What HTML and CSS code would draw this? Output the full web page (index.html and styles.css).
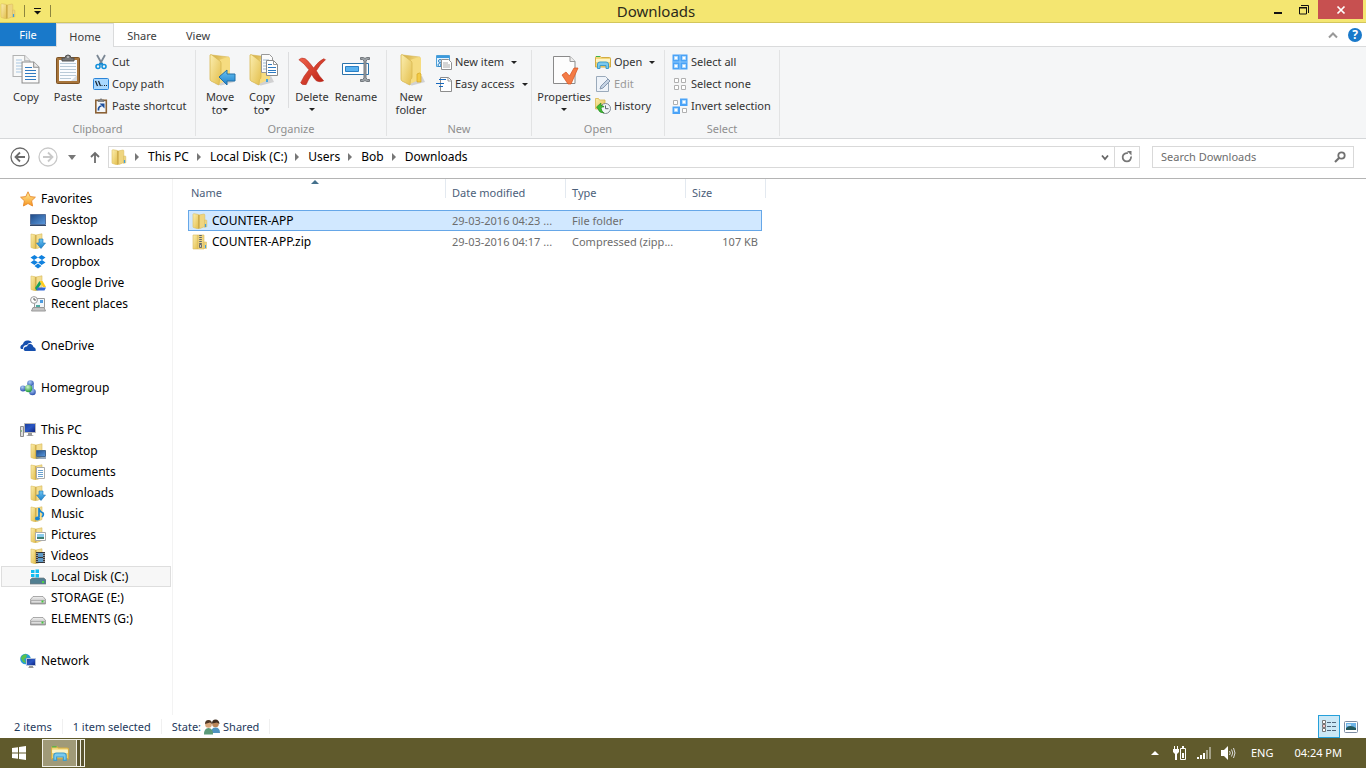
FILE: index.html
```html
<!DOCTYPE html>
<html lang="en">
<head>
<meta charset="utf-8">
<title>Downloads</title>
<link rel="stylesheet" href="styles.css">
</head>
<body>
<svg class="sprite" aria-hidden="true">
  <defs>
    <linearGradient id="gy" x1="0" y1="0" x2="1" y2="1"><stop offset="0" stop-color="#fbeeb0"/><stop offset="1" stop-color="#e3be4b"/></linearGradient>
    <linearGradient id="gd" x1="0" y1="0" x2="1" y2="0"><stop offset="0" stop-color="#d3ae45"/><stop offset="1" stop-color="#f3da83"/></linearGradient>
    <linearGradient id="gb" x1="0" y1="0" x2="0" y2="1"><stop offset="0" stop-color="#6cc4f2"/><stop offset="1" stop-color="#1b7fcb"/></linearGradient>
    <linearGradient id="gs" x1="0" y1="0" x2="1" y2="1"><stop offset="0" stop-color="#1d3f9a"/><stop offset=".5" stop-color="#2a56c4"/><stop offset="1" stop-color="#0c1f78"/></linearGradient>
    <linearGradient id="gk" x1="0" y1="0" x2="1" y2="1"><stop offset="0" stop-color="#1f4a86"/><stop offset="1" stop-color="#5c9be0"/></linearGradient>
    <linearGradient id="gr" x1="0" y1="0" x2="1" y2="1"><stop offset="0" stop-color="#f0624a"/><stop offset="1" stop-color="#b81d12"/></linearGradient>
    <linearGradient id="gg" x1="0" y1="0" x2="0" y2="1"><stop offset="0" stop-color="#f2f2f2"/><stop offset="1" stop-color="#a9a9a9"/></linearGradient>
    <linearGradient id="go" x1="0" y1="0" x2="0" y2="1"><stop offset="0" stop-color="#fff2a0"/><stop offset="1" stop-color="#f7941d"/></linearGradient>
    <radialGradient id="ball" cx=".4" cy=".3" r=".7"><stop offset="0" stop-color="#a9cdf5"/><stop offset="1" stop-color="#2b4fae"/></radialGradient>
    <radialGradient id="ballg" cx=".4" cy=".3" r=".7"><stop offset="0" stop-color="#d5f5cf"/><stop offset="1" stop-color="#1f9a3a"/></radialGradient>
  </defs>
  <symbol id="folder" viewBox="0 0 16 16"><path d="M1 1.500q0-.8 1-.8l4.500.8V16L1.500 14.500q-.5 0-.5-1z" fill="url(#gy)" stroke="#dcbd5c" stroke-width=".6"/><path d="M7 2l5-1q.8 0 .8 1v11.500L8 15.500l-1-.5z" fill="#efd57f" stroke="#dcbd5c" stroke-width=".6"/><path d="M6.900 2v13.500" stroke="#c39d33"/><path d="M12.500 7h1.700q.6 0 .6.800v6l-2.300.6z" fill="#ecd47f" stroke="#d8ba5c" stroke-width=".5"/><path d="M13.500 11v3" stroke="#3e9fe0" stroke-width="1.200"/></symbol>
  <symbol id="folder-side" viewBox="0 0 16 16"><path d="M1 1l4.500.8V16L1 14.500z" fill="url(#gy)" stroke="#dcbd5c" stroke-width=".6"/><path d="M6 2l6-1.200v12.700L7 15.500l-1-.3z" fill="#f3dd90" stroke="#d9ba5c" stroke-width=".6"/><path d="M5.800 2v13.500" stroke="#c39d33" stroke-width=".8"/></symbol>
  <symbol id="bigfolder" viewBox="0 0 32 32"><path d="M8 30l6 1.500 13-3.500-3-6z" fill="#9b9b9b" opacity=".4"/><path d="M5 1l17 2v22l-12 4z" fill="url(#gd)" stroke="#d3ae45" stroke-width=".5"/><path d="M12 6l9-3 2 1v21l-11 5z" fill="#f6dc80"/><path d="M3 1q1-1 2 0l8 6q1 1 1 2v14q0 2-1.500 2.500L12 31l-8-4q-1-.5-1-2z" fill="url(#gy)" stroke="#d8b752" stroke-width=".8"/></symbol>
  <symbol id="page" viewBox="0 0 18 22"><path d="M1 1h11l5 5v15H1z" fill="#fbfbfb" stroke="#8e8e8e"/><path d="M12 1v5h5" fill="#e8e8e8" stroke="#8e8e8e"/></symbol>
  <symbol id="copy" viewBox="0 0 32 32"><svg x="2" y="0" width="19" height="24" opacity=".65"><use href="#page"/></svg><path d="M6 6h6M6 9h8M6 12h6M6 15h6M6 18h6" stroke="#a9c7e2"/><svg x="11" y="6" width="19" height="25"><use href="#page"/></svg><path d="M15 13.500h7M15 16.500h11M15 19.500h11M15 22.500h11M15 25.500h11" stroke="#2f7ac1"/></symbol>
  <symbol id="paste" viewBox="0 0 32 32"><rect x="4.500" y="3.500" width="23" height="26" rx="1" fill="#a8753b" stroke="#7c5225"/><path d="M7 6h18v21H7z" fill="#fafcff"/><path d="M25 27h-6l6-6z" fill="#d7dde3"/><path d="M8 9.500h16M8 12.500h16M8 15.500h16M8 18.500h16M8 21.500h16M8 24.500h11" stroke="#b9cad8"/><path d="M10 7V4h3q0-3 3-3t3 3h3v3z" fill="#777" stroke="#555"/><path d="M15 3h2" stroke="#eee"/></symbol>
  <symbol id="cut" viewBox="0 0 16 16"><path d="M4 1l5 9M12 1L7 10" stroke="#7b8794" stroke-width="1.800"/><path d="M7.500 9l-1.200 2M8.500 9l1.200 2" stroke="#1583cb" stroke-width="2"/><circle cx="5" cy="12.500" r="2" fill="none" stroke="#1691dc" stroke-width="1.600"/><circle cx="11" cy="12.500" r="2" fill="none" stroke="#1691dc" stroke-width="1.600"/></symbol>
  <symbol id="copypath" viewBox="0 0 16 16"><rect x=".5" y="2.500" width="15" height="11" rx="1" fill="#a9d8ff" stroke="#2b84d8"/><path d="M2.500 5l2 5M5.500 5l2 5" stroke="#16202c" stroke-width="1.200"/><path d="M8.500 9.500h1M11 9.500h1M13 9.500h1" stroke="#16202c"/></symbol>
  <symbol id="pasteshort" viewBox="0 0 16 16"><rect x="2.800" y="2.300" width="10.500" height="12.500" fill="#f4f7fa" stroke="#8b6236" stroke-width="1.600"/><path d="M5 3.500V2h2l1-1.500L9 2h2v1.500z" fill="#888" stroke="#555" stroke-width=".5"/><path d="M5.500 12.500q-.5-4 3-4.500" fill="none" stroke="#1c4f9c" stroke-width="1.700"/><path d="M6.500 5.500h5v5z" fill="#1c4f9c"/></symbol>
  <symbol id="moveto" viewBox="0 0 32 32"><use href="#bigfolder" x="3" width="32" height="32"/><path d="M15 23l8-7v4h8v7h-8v4z" fill="url(#gb)" stroke="#2370a8"/></symbol>
  <symbol id="copyto" viewBox="0 0 32 32"><use href="#bigfolder" x="1" width="32" height="32"/><path d="M15.500.5h8l3 3v15h-11z" fill="#fbfbfb" stroke="#999"/><path d="M17 6h6M17 9h4M17 12h3M17 15h3" stroke="#9eb8d0"/><path d="M20.500 6.500h7l4 4v11h-11z" fill="#fff" stroke="#8b8b8b"/><path d="M27.500 6.500v4h4" fill="none" stroke="#999"/><path d="M22 10.500h4M22 13.500h8M22 16.500h8M22 18.500h8" stroke="#2f7ac1"/><path d="M21 25v3" stroke="#48a6df" stroke-width="2"/></symbol>
  <symbol id="delete" viewBox="0 0 32 32"><path transform="translate(1 2) scale(.92)" d="M2 4q3-3 7-1 4 3 9 10 6-8 11-10l2 1q-6 5-10 12 3 6 8 11-4 2-8 0-3-3-5-7-4 6-6 11-5 1-6-2 3-7 9-14Q8 8 2 4z" fill="url(#gr)" stroke="#b52a1d" stroke-width=".6"/></symbol>
  <symbol id="rename" viewBox="0 0 32 32"><path d="M2.500 9.500h26v11h-26z" fill="#fff" stroke="#2a72ab"/><path d="M5.500 12.500h13v5h-13z" fill="#5ab2f0" stroke="#2c7fc3"/><path d="M20.500 3.500h3l1.500 1 1.500-1h3v2h-2l-1.500 1.500v17l1.500 1.500h2v2h-3l-1.500-1-1.500 1h-3v-2h2l1.500-1.500V7L22.500 5.500h-2z" fill="#9aa0a5" stroke="#74797e"/></symbol>
  <symbol id="newfolder" viewBox="0 0 32 32"><use href="#bigfolder" x="3" width="32" height="32"/><path d="M22 20q3-2 4 0v8h-4z" fill="#f3cb46" stroke="#d5a622" stroke-width=".7"/></symbol>
  <symbol id="newitem" viewBox="0 0 16 16"><path d="M.5 1.500h13v11H.5z" fill="#e6f4ff" stroke="#4da0d8"/><path d="M1 2h12v2H1z" fill="#3c9add"/><circle cx="4" cy="7" r="1.500" fill="none" stroke="#2a83c5"/><circle cx="3.500" cy="11" r="1.500" fill="none" stroke="#2a83c5"/><path d="M5.500 5.500h7l3 3v7h-10z" fill="#fff" stroke="#929292"/><path d="M7 9h5M7 11h7M7 13h7" stroke="#aaa"/></symbol>
  <symbol id="easy" viewBox="0 0 16 16"><path d="M4.500 1.500h8l3 3v11h-11z" fill="#fff" stroke="#8d8d8d"/><path d="M12 1.500V5h3.500" fill="none" stroke="#999"/><path d="M3 3.500h7M0 7.500h8M3 10.500h4" stroke="#1768bd" stroke-width="1.200"/></symbol>
  <symbol id="properties" viewBox="0 0 32 32"><path d="M5.500 2.500H22l5 5v22H5.500z" fill="#fdfdfd" stroke="#8a8a8a"/><path d="M22 2.500v5h5" fill="#eee" stroke="#999"/><path d="M14 21l4-3 3.500 4L26 14h4l-7 16h-3z" fill="#f47b45" stroke="#d4501c" stroke-width=".7"/></symbol>
  <symbol id="explorer" viewBox="0 0 16 16"><path d="M.5 3.500q0-1 1-1h4l1 1h8q1 0 1 1V13H.5z" fill="#f3d679" stroke="#d3ad44"/><path d="M1 2.500h4" stroke="#3cb349"/><path d="M1 5h14v3H1z" fill="#fdf3c4"/><path d="M2.500 14.500V10Q2.500 8 5 8h6q2.500 0 2.500 2v4.500H11v-3H5v3z" fill="#79c9ee" stroke="#409cc7"/></symbol>
  <symbol id="edit" viewBox="0 0 16 16"><path d="M1.500.5h9l3 3v12h-12z" fill="#eef3f9" stroke="#9aaabb"/><path d="M5 13l1-3 7-7 2 2-7 7z" fill="#c5d3e4" stroke="#8598b0"/></symbol>
  <symbol id="history" viewBox="0 0 16 16"><path d="M.5.500h3l1 1.500H10v9H.5z" fill="url(#gy)" stroke="#d8b64b" stroke-width=".8"/><circle cx="10.500" cy="10.500" r="5" fill="#f2f5f7" stroke="#7e8890"/><path d="M10.500 7.500v3.200h3" fill="none" stroke="#59636d"/><path d="M1.500 9L6 5v2.500q3 0 3 1.500-2-.5-3 1 .5 3.500 3 5-5 0-6-4z" fill="#3fbb33" stroke="#22801f" stroke-width=".6"/></symbol>
  <symbol id="selall" viewBox="0 0 16 16"><path d="M.5.500h15v15H.5z" fill="#4ba3f7"/><path d="M8 .5v15M.5 8h15" stroke="#8ec8fb"/><path d="M2.500 2.500h3v3h-3zM10.500 2.500h3v3h-3zM2.500 10.500h3v3h-3zM10.500 10.500h3v3h-3z" fill="#fff" stroke="#b5dcfd"/></symbol>
  <symbol id="selnone" viewBox="0 0 16 16"><path d="M2.500 2.500h4v4h-4zM9.500 2.500h4v4h-4zM2.500 9.500h4v4h-4zM9.500 9.500h4v4h-4z" fill="#fff" stroke="#b0b0b0"/></symbol>
  <symbol id="selinv" viewBox="0 0 16 16"><path d="M1.500 2.500h4v4h-4zM10.500 10.500h4v4h-4z" fill="#fff" stroke="#b0b0b0"/><path d="M8 .5h7.500V8H8zM.5 8.500H8V16H.5z" fill="#4ba3f7"/><path d="M10.500 2.500h3v3h-3zM2.500 10.500h3v3h-3z" fill="#fff" stroke="#b5dcfd"/></symbol>
  <symbol id="star" viewBox="0 0 16 16"><path d="M8 .8l2.200 4.800 5.200.6-3.800 3.600 1 5.200L8 12.500 3.400 15l1-5.200L.6 6.200l5.200-.6z" fill="url(#go)" stroke="#e8892b" stroke-width=".9"/></symbol>
  <symbol id="desktop" viewBox="0 0 16 16"><path d="M.5 2.500h15v10H.5z" fill="url(#gk)" stroke="#536e9a"/><path d="M0 13h16v1H0z" fill="#2d4568"/></symbol>
  <symbol id="down" viewBox="0 0 16 16"><use href="#folder-side"/><path d="M9 6h4v4h2.500L11 15.500 6.500 10H9z" fill="url(#gb)" stroke="#1c75b5" stroke-width=".6"/></symbol>
  <symbol id="dropbox" viewBox="0 0 16 16"><path d="M4.500 1L.5 3.500 4 6l4-2.500zM11.500 1l4 2.500L12 6 8 3.500zM.5 8.500L4.500 11 8 8.300 4 6zM15.500 8.500l-4 2.500L8 8.300 12 6zM4.500 12L8 9.500l3.500 2.500L8 14.500z" fill="#1081de"/></symbol>
  <symbol id="gdrive" viewBox="0 0 16 16"><use href="#folder-side"/><path d="M9.500 6h3l3.500 6h-3z" fill="#ffcd1e"/><path d="M9.500 6L5 13l1.500 2.500L11 9z" fill="#15a05d"/><path d="M7.500 12.500H16l-1.500 3h-8z" fill="#3269d6"/></symbol>
  <symbol id="recent" viewBox="0 0 16 16"><path d="M4.500 2.500h10v9h-10z" fill="#f1f7fb" stroke="#9a9a9a"/><path d="M10 4h3v3h-3z" fill="#4d9be0"/><path d="M3 11.500h11l1.500 3.500h-14z" fill="#c4c4c4" stroke="#999"/><circle cx="4" cy="4" r="3.400" fill="#fff" stroke="#999"/><path d="M4 2v2h2" fill="none" stroke="#555"/><path d="M6 9h4v2H6z" fill="#4fa9a0"/></symbol>
  <symbol id="onedrive" viewBox="0 0 16 16"><path d="M1 11q-2-3 2-5 1-4 5-3.500Q11 2 12 5q-3-1-5 2-4 0-4 4z" fill="#164fae"/><path d="M5 13q-2-1-1-3 1-2 3-1.500Q8 5 11 6q2 1 2.500 3 3 1 2 4z" fill="#164fae"/></symbol>
  <symbol id="homegroup" viewBox="0 0 16 16"><circle cx="10.500" cy="3.500" r="3.300" fill="url(#ball)"/><circle cx="3" cy="8.500" r="3" fill="url(#ball)"/><circle cx="12.500" cy="12" r="3.300" fill="url(#ball)"/><path d="M13 5v6" stroke="#7fa3dd" stroke-width="2"/><circle cx="8.500" cy="8.500" r="3.700" fill="url(#ballg)"/></symbol>
  <symbol id="thispc" viewBox="0 0 16 16"><path d="M.5 4.500h3v10h-3z" fill="#ddd" stroke="#8c8c8c"/><path d="M1 9h1" stroke="#31a936"/><path d="M4.500 1.500h11v9h-11z" fill="url(#gs)" stroke="#b8b8b8"/><path d="M8 11h4v2l2 1H6l2-1z" fill="#9a9a9a"/></symbol>
  <symbol id="fdesk" viewBox="0 0 16 16"><use href="#folder-side"/><path d="M6.500 7.500h9v6h-9z" fill="url(#gk)" stroke="#44678f"/><path d="M6 15h10" stroke="#34567b"/></symbol>
  <symbol id="fdocs" viewBox="0 0 16 16"><use href="#folder-side"/><path d="M6.500 3.500h8v11h-8z" fill="#fff" stroke="#aaa"/><path d="M8 6.500h5M8 8.500h5M8 10.500h5M8 12.500h5" stroke="#6aa1ce"/></symbol>
  <symbol id="fmusic" viewBox="0 0 16 16"><use href="#folder-side"/><path d="M9 2v9M9 3q1 3 4 4 1 2-1 4" fill="none" stroke="#1783d1" stroke-width="1.700"/><ellipse cx="7.500" cy="12.500" rx="2.500" ry="2" fill="#1783d1"/></symbol>
  <symbol id="fpics" viewBox="0 0 16 16"><use href="#folder-side"/><path d="M5.500 5.500h10v8h-10z" fill="#fff" stroke="#aaa"/><path d="M7 7h7v3H7z" fill="#8acbed"/><path d="M7 10h7v2H7z" fill="#3e7f72"/></symbol>
  <symbol id="fvideo" viewBox="0 0 16 16"><use href="#folder-side"/><path d="M6 4h9v11H6z" fill="#35363a"/><path d="M8 5h5v4H8zM8 10h5v4H8z" fill="#5e9bc9"/><path d="M7 5v10M14 5v10" stroke="#eee" stroke-dasharray="1 1"/></symbol>
  <symbol id="disk" viewBox="0 0 16 16"><path d="M3 6.500h10l3 3.500v3q0 1-1 1H1q-1 0-1-1v-3z" fill="url(#gg)" stroke="#888" stroke-width=".7"/><path d="M1 10.500h14v2.500H1z" fill="#dedede" stroke="#888" stroke-width=".5"/><path d="M11.500 10.500h2v2h-2z" fill="#45c63e"/></symbol>
  <symbol id="sysdisk" viewBox="0 0 16 16"><path d="M2 9h12l2 2v4H0v-4z" fill="#527f91" stroke="#707d83" stroke-width=".7"/><path d="M12 12h2v2h-2z" fill="#4bd145"/><path d="M1 1h3.500v3H1zM5.500.5H9V4H5.500zM1 5h3.500v3H1zM5.500 5H9v3.500H5.500z" fill="#10bdf2"/></symbol>
  <symbol id="network" viewBox="0 0 16 16"><circle cx="5.500" cy="6" r="5.300" fill="#289bd6"/><path d="M2 3q3-3 5-1L6 5 4 6l2 4-3-1-2-4z" fill="#5bc24b"/><path d="M6.500 5.500h9v7h-9z" fill="url(#gs)" stroke="#b9c5d8"/><path d="M9 13h4v1l1 1H8l1-1z" fill="#999"/></symbol>
  <symbol id="zip" viewBox="0 0 16 16"><path d="M1 1h5v14H1z" fill="url(#gy)" stroke="#d9ba5c" stroke-width=".6"/><path d="M6 1h6v14H6z" fill="#efd57f" stroke="#d9ba5c" stroke-width=".6"/><path d="M12 8h2.500v6.500H12z" fill="#ecd47f" stroke="#d8ba5c" stroke-width=".5"/><path d="M13.500 11v3" stroke="#3e9fe0"/><path d="M8.500 1v9" stroke="#5b6470" stroke-width="2.600" stroke-dasharray="1 1"/><path d="M7.500 10.500h2v3h-2z" fill="#ccc" stroke="#555" stroke-width=".8"/></symbol>
  <symbol id="people" viewBox="0 0 16 16"><circle cx="11.500" cy="5" r="3.300" fill="#b98558"/><path d="M8 4.500Q8 .5 11.500.5T15.500 5L13 3.500z" fill="#3e2c1f"/><path d="M7 14q0-5.500 4.500-5.500T16 14z" fill="#4f93bf"/><circle cx="4.500" cy="5.500" r="3.300" fill="#d8a67a"/><path d="M1 5q0-4 3.500-4T8 5L6 3.500z" fill="#4d3726"/><path d="M0 15.500Q0 9 4.500 9T9 15.500z" fill="#5b9b79"/></symbol>
</svg>

<header class="titlebar">
  <div class="quick"><svg class="i16"><use href="#folder"/></svg><span class="tick"></span><button class="plain" aria-label="Customize toolbar"><svg width="9" height="8"><path d="M1 1.500h7" stroke="#111"/><path d="M1 4h7L4.500 7.500z" fill="#111"/></svg></button><span class="tick"></span></div>
  <h1 class="title">Downloads</h1>
  <div class="winbtns">
    <button class="plain win" aria-label="Minimize"><svg width="10" height="12"><path d="M1 9h8" stroke="#111" stroke-width="2"/></svg></button>
    <button class="plain win" aria-label="Restore"><svg width="12" height="12"><path d="M1.500 4h7v6h-7zM1 3.500h8" fill="none" stroke="#111"/><path d="M3 1.500h7.500V9" fill="none" stroke="#111"/></svg></button>
    <button class="plain close" aria-label="Close"><svg width="10" height="10"><path d="M1.500 1.500l7 7M8.500 1.500l-7 7" stroke="#fff" stroke-width="1.700"/></svg></button>
  </div>
</header>

<nav class="tabs">
  <button class="tab file">File</button><button class="tab home">Home</button><button class="tab">Share</button><button class="tab">View</button>
  <div class="tabs-end"><button class="plain" aria-label="Collapse ribbon"><svg width="10" height="8"><path d="M1 6.500l4-4 4 4" fill="none" stroke="#999" stroke-width="2"/></svg></button><button class="plain help" aria-label="Help">?</button></div>
</nav>

<section class="ribbon">
  <div class="group g-clip"><div class="tools">
    <button class="big"><svg class="i32"><use href="#copy"/></svg><span>Copy</span></button>
    <button class="big"><svg class="i32"><use href="#paste"/></svg><span>Paste</span></button>
    <div class="stack"><button class="small"><svg class="i16"><use href="#cut"/></svg>Cut</button><button class="small"><svg class="i16"><use href="#copypath"/></svg>Copy path</button><button class="small"><svg class="i16"><use href="#pasteshort"/></svg>Paste shortcut</button></div>
  </div><div class="caption">Clipboard</div></div>
  <div class="group g-org"><div class="tools">
    <button class="big"><svg class="i32"><use href="#moveto"/></svg><span>Move</span><span class="arrowed">to<i class="caret"></i></span></button>
    <button class="big"><svg class="i32"><use href="#copyto"/></svg><span>Copy</span><span class="arrowed">to<i class="caret"></i></span></button>
    <span class="vsep"></span>
    <button class="big"><svg class="i32"><use href="#delete"/></svg><span>Delete</span><span class="arrowed"><i class="caret"></i></span></button>
    <button class="big wide"><svg class="i32"><use href="#rename"/></svg><span>Rename</span></button>
  </div><div class="caption">Organize</div></div>
  <div class="group g-new"><div class="tools">
    <button class="big"><svg class="i32"><use href="#newfolder"/></svg><span>New</span><span>folder</span></button>
    <div class="stack"><button class="small"><svg class="i16"><use href="#newitem"/></svg>New item<i class="caret"></i></button><button class="small"><svg class="i16"><use href="#easy"/></svg>Easy access<i class="caret"></i></button></div>
  </div><div class="caption">New</div></div>
  <div class="group g-open"><div class="tools">
    <button class="big wider"><svg class="i32"><use href="#properties"/></svg><span>Properties</span><span class="arrowed"><i class="caret"></i></span></button>
    <div class="stack"><button class="small"><svg class="i16"><use href="#explorer"/></svg>Open<i class="caret"></i></button><button class="small" disabled><svg class="i16"><use href="#edit"/></svg>Edit</button><button class="small"><svg class="i16"><use href="#history"/></svg>History</button></div>
  </div><div class="caption">Open</div></div>
  <div class="group g-sel"><div class="tools">
    <div class="stack"><button class="small"><svg class="i16"><use href="#selall"/></svg>Select all</button><button class="small"><svg class="i16"><use href="#selnone"/></svg>Select none</button><button class="small"><svg class="i16"><use href="#selinv"/></svg>Invert selection</button></div>
  </div><div class="caption">Select</div></div>
</section>

<section class="address">
  <div class="navs">
    <button class="plain" aria-label="Back"><svg width="20" height="20"><circle cx="10" cy="10" r="9" fill="none" stroke="#6b6b6b" stroke-width="1.300"/><path d="M15 10H6M10 5.500L5.500 10l4.500 4.500" fill="none" stroke="#6b6b6b" stroke-width="1.800"/></svg></button>
    <button class="plain" aria-label="Forward"><svg width="20" height="20"><circle cx="10" cy="10" r="9" fill="none" stroke="#c9c9c9" stroke-width="1.300"/><path d="M5 10h9M10 5.500l4.500 4.500-4.500 4.500" fill="none" stroke="#c9c9c9" stroke-width="1.800"/></svg></button>
    <button class="plain" aria-label="Recent locations"><svg width="8" height="5"><path d="M0 0h8L4 5z" fill="#777"/></svg></button>
    <button class="plain" aria-label="Up"><svg width="10" height="12"><path d="M5 12V2M1 6l4-4 4 4" fill="none" stroke="#6d6d6d" stroke-width="1.800"/></svg></button>
  </div>
  <div class="pathbox">
    <svg class="i16"><use href="#folder"/></svg>
    <div class="crumbs">
      <svg class="chev"><path d="M0 0l4 4-4 4z"/></svg><button class="crumb">This PC</button>
      <svg class="chev"><path d="M0 0l4 4-4 4z"/></svg><button class="crumb">Local Disk (C:)</button>
      <svg class="chev"><path d="M0 0l4 4-4 4z"/></svg><button class="crumb">Users</button>
      <svg class="chev"><path d="M0 0l4 4-4 4z"/></svg><button class="crumb">Bob</button>
      <svg class="chev"><path d="M0 0l4 4-4 4z"/></svg><button class="crumb">Downloads</button>
    </div>
    <button class="plain drop" aria-label="Previous locations"><svg width="8" height="7"><path d="M1 1.500l3 3.500 3-3.500" fill="none" stroke="#666" stroke-width="1.800"/></svg></button>
    <button class="plain refresh" aria-label="Refresh"><svg width="12" height="12"><path d="M10 5.500A4.200 4.200 0 1 1 7 2.200" fill="none" stroke="#777" stroke-width="1.800"/><path d="M6 0h4.500v4.500z" fill="#777"/></svg></button>
  </div>
  <div class="search"><input type="search" placeholder="Search Downloads" aria-label="Search Downloads"><svg width="12" height="12"><circle cx="7.500" cy="4.500" r="3.200" fill="none" stroke="#707070" stroke-width="1.800"/><path d="M5 7l-4 4" stroke="#707070" stroke-width="2.200"/></svg></div>
</section>

<main class="main">
  <nav class="side">
    <a href="#" class="root"><svg class="i16"><use href="#star"/></svg>Favorites</a>
    <a href="#"><svg class="i16"><use href="#desktop"/></svg>Desktop</a>
    <a href="#"><svg class="i16"><use href="#down"/></svg>Downloads</a>
    <a href="#"><svg class="i16"><use href="#dropbox"/></svg>Dropbox</a>
    <a href="#"><svg class="i16"><use href="#gdrive"/></svg>Google Drive</a>
    <a href="#"><svg class="i16"><use href="#recent"/></svg>Recent places</a>
    <a href="#" class="root gap"><svg class="i16"><use href="#onedrive"/></svg>OneDrive</a>
    <a href="#" class="root gap"><svg class="i16"><use href="#homegroup"/></svg>Homegroup</a>
    <a href="#" class="root gap"><svg class="i16"><use href="#thispc"/></svg>This PC</a>
    <a href="#"><svg class="i16"><use href="#fdesk"/></svg>Desktop</a>
    <a href="#"><svg class="i16"><use href="#fdocs"/></svg>Documents</a>
    <a href="#"><svg class="i16"><use href="#down"/></svg>Downloads</a>
    <a href="#"><svg class="i16"><use href="#fmusic"/></svg>Music</a>
    <a href="#"><svg class="i16"><use href="#fpics"/></svg>Pictures</a>
    <a href="#"><svg class="i16"><use href="#fvideo"/></svg>Videos</a>
    <a href="#" class="current"><svg class="i16"><use href="#sysdisk"/></svg>Local Disk (C:)</a>
    <a href="#"><svg class="i16"><use href="#disk"/></svg>STORAGE (E:)</a>
    <a href="#"><svg class="i16"><use href="#disk"/></svg>ELEMENTS (G:)</a>
    <a href="#" class="root gap"><svg class="i16"><use href="#network"/></svg>Network</a>
  </nav>
  <div class="files">
    <svg class="sort" width="8" height="4"><path d="M4 0l4 4H0z" fill="#44708c"/></svg>
    <table>
      <colgroup><col class="c-name"><col class="c-date"><col class="c-date"><col class="c-size"><col class="c-end"></colgroup>
      <thead><tr><th>Name</th><th>Date modified</th><th>Type</th><th colspan="2">Size</th></tr></thead>
      <tbody>
        <tr class="picked"><td class="name"><div class="file-name"><svg class="i16"><use href="#folder"/></svg>COUNTER-APP</div></td><td>29-03-2016 04:23 ...</td><td>File folder</td><td class="num"></td></tr>
        <tr><td class="name"><div class="file-name"><svg class="i16"><use href="#zip"/></svg>COUNTER-APP.zip</div></td><td>29-03-2016 04:17 ...</td><td>Compressed (zipp...</td><td class="num">107 KB</td></tr>
      </tbody>
    </table>
  </div>
</main>

<footer class="status">
  <span class="st">2 items</span><span class="st">1 item selected</span><span class="st state">State:<svg class="i16"><use href="#people"/></svg>Shared</span>
  <div class="views">
    <button class="plain view on" aria-label="Details"><svg width="16" height="13"><path d="M1.500.5h3v3h-3zM1.500 4.500h3v3h-3zM1.500 8.500h3v3h-3z" fill="#fff" stroke="#777"/><path d="M2.500 6h1" stroke="#d22"/><path d="M6 2.500h4M11 2.500h4M6 6.500h4M11 6.500h4M6 10.500h4M11 10.500h4" stroke="#50667c"/></svg></button>
    <button class="plain view" aria-label="Large icons"><svg width="14" height="12"><rect x=".5" y=".5" width="13" height="11" rx="1" fill="#fff" stroke="#7e8da3"/><path d="M2 2h10v7H2z" fill="#6db4e8"/><path d="M2 7q4-4 10 0v2H2z" fill="#23585c"/><path d="M3 4h4" stroke="#fff"/></svg></button>
  </div>
</footer>

<footer class="taskbar">
  <button class="plain start" aria-label="Start"><svg width="14" height="14"><path d="M0 2l6-.8v5.300H0zM7 1l7-1v6.500H7zM0 7.500h6v5.300L0 12zM7 7.500h7V14l-7-1z" fill="#fff"/></svg></button>
  <button class="task" aria-label="File Explorer"><svg class="i18"><use href="#explorer"/></svg></button><span class="pile"></span><span class="pile"></span>
  <div class="tray">
    <button class="plain" aria-label="Show hidden icons"><svg width="8" height="4"><path d="M4 0l4 4H0z" fill="#fff"/></svg></button>
    <svg width="16" height="16"><path d="M2.500 1v3M5.500 1v3" stroke="#fff"/><path d="M1 4h6v3L5 9v6H3V9L1 7z" fill="#fff"/><path d="M8.500 3.500h5v11h-5z" fill="none" stroke="#fff"/><path d="M10 2h2" stroke="#fff" stroke-width="2"/><path d="M10 8h2v5h-2z" fill="#fff"/></svg>
    <svg width="16" height="14"><path d="M1 11h2v2H1zM4 9h2v4H4zM7 7h2v6H7z" fill="#fff"/><path d="M10 4h2v9h-2zM13 1h2v12h-2z" fill="#a5a288"/></svg>
    <svg width="16" height="14"><path d="M1 4h3l4-4v14l-4-4H1z" fill="#fff"/><path d="M9.500 5q1.500 2 0 4M11.500 3.500q2.500 3.500 0 7M13.500 2q3 5 0 10" fill="none" stroke="#ddd"/></svg>
    <span class="lang">ENG</span><time class="clock">04:24 PM</time>
  </div>
</footer>
</body>
</html>
```
FILE: styles.css
```css
* { box-sizing: border-box; }
body {
  margin: 0;
  min-height: 100vh;
  display: flex;
  flex-direction: column;
  background: #fff;
  color: #000;
  font: 11px/16px "Noto Sans", "Open Sans", sans-serif;
}
button, input { font: inherit; color: inherit; }
button { border: 0; background: none; padding: 0; }
svg { flex: none; display: block; }
.sprite { position: absolute; width: 0; height: 0; }
.i16 { width: 16px; height: 16px; }
.i18 { width: 18px; height: 18px; }
.i32 { width: 32px; height: 32px; }
.plain { display: flex; align-items: center; justify-content: center; }

.titlebar {
  display: grid;
  grid-template-columns: 1fr auto 1fr;
  height: 23px;
  background: #f4e671;
  border-bottom: 1px solid #d3c65c;
}
.quick { display: flex; align-items: center; gap: 8px; }
.tick { width: 1px; height: 12px; background: #8d853f; }
.title { margin: 0; padding-right: 54px; font-size: 15px; font-weight: 400; line-height: 22px; color: #2c2a1a; }
.winbtns { display: flex; justify-content: flex-end; height: 19px; }
.win { width: 26px; }
.close { width: 45px; margin-right: 3px; margin-left: 1px; background: #c75050; }

.tabs { display: flex; height: 24px; border-bottom: 1px solid #dadbdc; color: #3b3b3b; }
.tab { width: 56px; padding-top: 2px; }
.file { background: #1979ca; color: #fff; height: 23px; padding-top: 0; }
.home { width: 58px; height: 24px; background: #f5f6f7; border: 1px solid #dadbdc; border-width: 1px 1px 0; }
.tabs-end { display: flex; align-items: center; gap: 10px; margin-left: auto; padding-right: 4px; }
.help { width: 14px; height: 14px; border-radius: 50%; background: #1979ca; color: #fff; font-size: 12px; font-weight: 700; }

.ribbon { display: flex; height: 92px; padding: 3px 0 2px; background: #f5f6f7; border-bottom: 1px solid #d5d7d9; color: #333; }
.group { display: flex; flex-direction: column; justify-content: space-between; border-right: 1px solid #e2e3e4; }
.tools { display: flex; }
.g-clip { width: 196px; }
.g-org { width: 191px; }
.g-new { width: 145px; }
.g-open { width: 133px; }
.g-sel { width: 115px; }
.g-clip .tools, .g-open .tools { padding-left: 5px; }
.g-org .tools, .g-new .tools, .g-sel .tools { padding-left: 3px; }
.big { display: flex; flex: none; flex-direction: column; align-items: center; width: 42px; padding-top: 4px; line-height: 13px; }
.big .i32 { margin-bottom: 4px; }
.big.wide { width: 46px; }
.big.wider { width: 54px; }
.arrowed { display: flex; align-items: center; min-height: 13px; }
.caret { width: 0; height: 0; margin-left: 4px; border: 3px solid transparent; border-top-color: #222; border-bottom: 0; }
.arrowed .caret:only-child { margin-left: 0; }
.vsep { width: 1px; height: 56px; margin: 2px 2px 0 5px; background: #dcdddf; }
.stack { margin-left: 4px; padding-top: 1px; }
.small { display: flex; align-items: center; gap: 3px; height: 22px; white-space: nowrap; }
.small:disabled { color: #9a9a9a; }
.caption { text-align: center; color: #8f8f8f; line-height: 14px; }

.address { display: flex; align-items: center; height: 40px; padding: 0 12px 3px 10px; border-bottom: 1px solid #b4b4b4; }
.navs { display: flex; align-items: center; gap: 8px; width: 98px; }
.navs .plain:nth-child(3) { padding: 0 6px 0 2px; }
.pathbox { display: flex; align-items: center; flex: 1; height: 22px; padding-left: 2px; border: 1px solid #d9d9d9; }
.crumbs { display: flex; align-items: center; gap: 8px; flex: 1; margin-left: 8px; font-size: 12px; }
.chev { width: 5px; height: 8px; fill: #777; }
.drop { width: 18px; height: 20px; }
.refresh { width: 25px; height: 20px; border-left: 1px solid #d9d9d9; }
.search { display: flex; align-items: center; width: 202px; height: 22px; margin-left: 12px; padding: 0 7px 0 8px; border: 1px solid #d9d9d9; }
.search input { flex: 1; min-width: 0; padding: 0; border: 0; outline: 0; background: none; appearance: none; }
.search input::placeholder { color: #6d6d6d; opacity: 1; }

.main { display: flex; flex: 1; }
.side { width: 173px; padding: 9px 1px 0; border-right: 1px solid #f3f3f3; font-size: 12px; }
.side a { display: flex; align-items: center; gap: 5px; height: 21px; padding-left: 28px; border: 1px solid transparent; color: #000; text-decoration: none; white-space: nowrap; }
.side .root { padding-left: 18px; }
.side .gap { margin-top: 21px; }
.side .current { background: #f7f7f7; border-color: #dedede; }
.files { position: relative; flex: 1; padding-left: 15px; }
.sort { position: absolute; left: 138px; top: 1px; }
table { table-layout: fixed; width: 578px; border-collapse: separate; border-spacing: 0; }
.c-name { width: 258px; }
.c-date { width: 120px; }
.c-size { width: 76px; }
.c-end { width: 4px; }
th { height: 31px; padding: 6px 6px 9px; border-right: 1px solid; border-image: linear-gradient(#e3e9f0 60%, transparent 60%) 1; text-align: left; font-weight: 400; color: #4c607a; }
th:first-child { padding-left: 3px; }
td { height: 21px; padding: 0 6px; color: #6d6d6d; white-space: nowrap; }
.name { padding: 0 4px; color: #000; font-size: 12px; }
.num { text-align: right; padding-right: 4px; }
.file-name { display: flex; align-items: center; gap: 4px; }
.picked td { background: linear-gradient(#66a7e8, #66a7e8) 0 0 / 100% 1px no-repeat, linear-gradient(#66a7e8, #66a7e8) 0 100% / 100% 1px no-repeat, #d1e8ff; }
.picked .name { border-left: 1px solid #66a7e8; padding-left: 3px; }
.picked .num { border-right: 1px solid #66a7e8; }

.status { display: flex; height: 23px; padding-left: 14px; color: #1e395b; }
.st { display: flex; align-items: center; gap: 3px; margin: 4px 10px 4px 0; padding-right: 10px; border-right: 1px solid #f0f0f0; }
.views { display: flex; margin-left: auto; padding-right: 4px; }
.view { width: 22px; height: 23px; }
.view.on { background: #cbe8f6; border: 1px solid #26a0da; }

.taskbar { display: flex; height: 30px; background: #605a2c; color: #fff; }
.start { width: 38px; margin-right: 4px; }
.task { display: flex; align-items: center; justify-content: center; width: 35px; margin: 1px 0; border: 1px solid #f1f0e6; background: #a09a78; }
.pile { width: 4px; margin: 1px 0; border: 1px solid #f1f0e6; border-left: 0; background: #5b552f; }
.tray { display: flex; align-items: center; gap: 8px; margin-left: auto; padding-right: 24px; }
.tray .plain { margin-right: 5px; }
.lang { margin-left: 7px; }
.clock { margin-left: 13px; }
```
